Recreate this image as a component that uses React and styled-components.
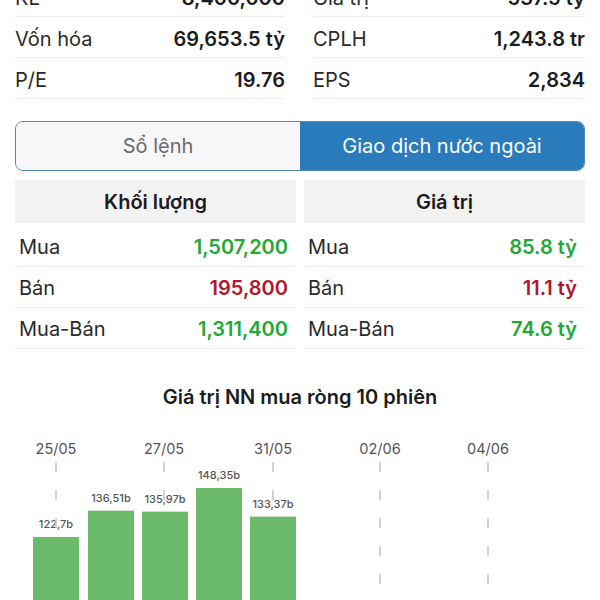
import React from "react";
import styled, { createGlobalStyle } from "styled-components";

const GlobalStyle = createGlobalStyle`
  body {
    margin: 0;
    background: #ffffff;
    font-family: Inter, "Noto Sans", sans-serif;
    color: #1c1c1e;
    overflow: hidden;
  }
`;

const stats = [
  [
    ["KL", "8,400,000"],
    ["Vốn hóa", "69,653.5 tỷ"],
    ["P/E", "19.76"],
  ],
  [
    ["Giá trị", "537.5 tỷ"],
    ["CPLH", "1,243.8 tr"],
    ["EPS", "2,834"],
  ],
];

const foreign = [
  {
    title: "Khối lượng",
    rows: [
      ["Mua", "1,507,200", "up"],
      ["Bán", "195,800", "down"],
      ["Mua-Bán", "1,311,400", "up"],
    ],
  },
  {
    title: "Giá trị",
    rows: [
      ["Mua", "85.8 tỷ", "up"],
      ["Bán", "11.1 tỷ", "down"],
      ["Mua-Bán", "74.6 tỷ", "up"],
    ],
  },
];

const bars = [
  { x: 33, value: 122.7, label: "122,7b" },
  { x: 88, value: 136.51, label: "136,51b" },
  { x: 142, value: 135.97, label: "135,97b" },
  { x: 196, value: 148.35, label: "148,35b" },
  { x: 250, value: 133.37, label: "133,37b" },
];

const ticks = [
  { x: 56, label: "25/05" },
  { x: 164, label: "27/05" },
  { x: 273, label: "31/05" },
  { x: 380, label: "02/06" },
  { x: 488, label: "04/06" },
];

const App = () => {
  return (
    <Page>
      <GlobalStyle />
      <StatsGrid>
        {stats.map((col, i) => (
          <StatsCol key={i}>
            {col.map(([label, value]) => (
              <StatRow key={label}>
                <span>{label}</span>
                <b>{value}</b>
              </StatRow>
            ))}
          </StatsCol>
        ))}
      </StatsGrid>

      <Segmented>
        <Segment>Sổ lệnh</Segment>
        <Segment active>Giao dịch nước ngoài</Segment>
      </Segmented>

      <ForeignGrid>
        {foreign.map((col) => (
          <ForeignCol key={col.title}>
            <ColHeader>{col.title}</ColHeader>
            {col.rows.map(([label, value, dir]) => (
              <DataRow key={label}>
                <span>{label}</span>
                <Value dir={dir}>{value}</Value>
              </DataRow>
            ))}
          </ForeignCol>
        ))}
      </ForeignGrid>

      <ChartTitle>Giá trị NN mua ròng 10 phiên</ChartTitle>
      <Chart />
    </Page>
  );
};

const Chart = () => {
  const scale = 1.91;
  const base = 114 + 122.7 * scale;
  return (
    <ChartSvg width="600" height="182" viewBox="0 0 600 182">
      {ticks.map((t) => (
        <text
          key={t.label}
          x={t.x}
          y={31}
          textAnchor="middle"
          fontSize="14.5"
          fill="#555"
          fontFamily="Inter, sans-serif"
        >
          {t.label}
        </text>
      ))}
      {bars.map((b) => (
        <text
          key={b.label}
          x={b.x + 23}
          y={base - b.value * scale - 9}
          textAnchor="middle"
          fontSize="11"
          fontWeight="500"
          fill="#555"
          fontFamily="Inter, sans-serif"
        >
          {b.label}
        </text>
      ))}
      {ticks.map((t) => (
        <line
          key={t.label}
          x1={t.x}
          x2={t.x}
          y1={39}
          y2={182}
          stroke="#c4c4c4"
          strokeWidth="1.5"
          strokeDasharray="10 18"
        />
      ))}
      {bars.map((b) => {
        const top = base - b.value * scale;
        return (
          <rect key={b.label} x={b.x} y={top} width={46} height={182 - top} fill="#6cbb6a" />
        );
      })}
    </ChartSvg>
  );
};

export default App;

const Page = styled.div`
  width: 600px;
  height: 600px;
  overflow: hidden;
  padding: 0 15px;
  box-sizing: border-box;
`;

const StatsGrid = styled.div`
  margin-top: -24px;
  display: grid;
  grid-template-columns: 270px 272px;
  justify-content: space-between;
`;

const StatsCol = styled.div`
  display: flex;
  flex-direction: column;
`;

const StatRow = styled.div`
  height: 37px;
  padding-top: 3px;
  border-bottom: 1px solid #ececec;
  display: flex;
  align-items: center;
  justify-content: space-between;
  font-size: 20px;

  span {
    color: #2a2a2c;
  }

  b {
    font-weight: 600;
    color: #1c1c1e;
  }
`;

const Segmented = styled.div`
  margin-top: 22px;
  height: 50px;
  box-sizing: border-box;
  display: grid;
  grid-template-columns: 1fr 1fr;
  border: 1.5px solid #4f87b5;
  border-radius: 8px;
  overflow: hidden;
`;

const Segment = styled.div`
  display: flex;
  align-items: center;
  justify-content: center;
  font-size: 20px;
  background: ${(p) => (p.active ? "#2a7bbb" : "#f7f7f9")};
  color: ${(p) => (p.active ? "#ffffff" : "#6a6a6e")};
`;

const ForeignGrid = styled.div`
  margin-top: 9px;
  display: grid;
  grid-template-columns: 281px 281px;
  justify-content: space-between;
`;

const ForeignCol = styled.div`
  display: flex;
  flex-direction: column;
`;

const ColHeader = styled.div`
  height: 43px;
  background: #f2f2f3;
  display: flex;
  align-items: center;
  justify-content: center;
  font-size: 20px;
  font-weight: 600;
  margin-bottom: 3px;
`;

const DataRow = styled.div`
  height: 38px;
  padding: 2px 8px 0 4px;
  border-bottom: 1px solid #ececec;
  display: flex;
  align-items: center;
  justify-content: space-between;
  font-size: 20px;
  color: #2a2a2c;
`;

const Value = styled.b`
  font-weight: 600;
  color: ${(p) => (p.dir === "down" ? "#b3162b" : "#22a834")};
`;

const ChartTitle = styled.div`
  margin-top: 36px;
  text-align: center;
  font-size: 20px;
  font-weight: 600;
  color: #1c1c1e;
`;

const ChartSvg = styled.svg`
  display: block;
  margin: 14px -15px 0;
`;
